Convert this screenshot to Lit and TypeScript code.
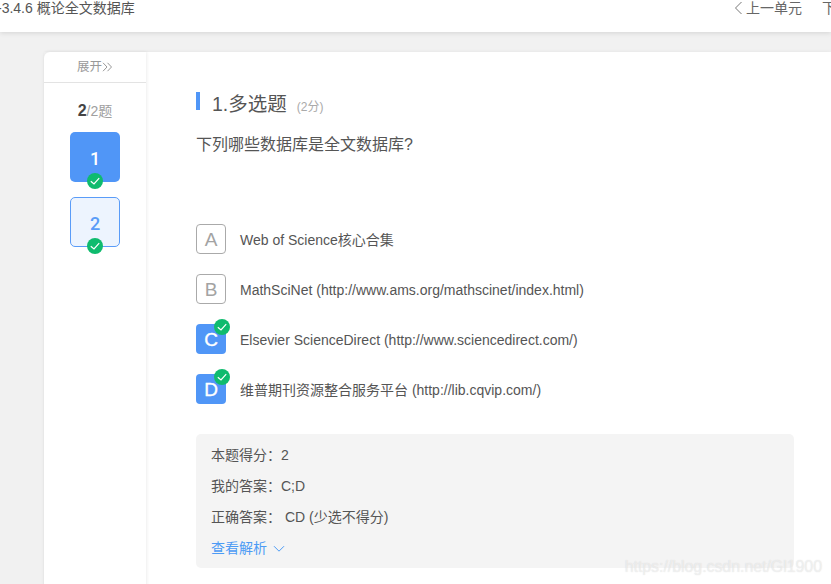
import { LitElement, html, css, svg } from "lit";
import { customElement } from "lit/decorators.js";

const check = svg`<svg class="chk" viewBox="0 0 16 16" width="16" height="16"><circle cx="8" cy="8" r="8" fill="#0fbb6e"/><path d="M3.8 8.2 7 11 12.2 5.2" fill="none" stroke="#fff" stroke-width="1.2"/></svg>`;

@customElement("app-root")
export class AppRoot extends LitElement {
  static styles = css`
    :host {
      display: block;
      width: 831px;
      height: 584px;
      overflow: hidden;
      background: #f1f1f1;
      font-family: "Liberation Sans", "Noto Sans CJK SC", sans-serif;
      color: #555;
    }
    .top {
      height: 32px;
      background: #fff;
      box-shadow: 0 1px 5px rgba(0, 0, 0, 0.12);
      display: flex;
      justify-content: space-between;
      font-size: 14px;
      line-height: 16px;
      color: #555;
      overflow: hidden;
      white-space: nowrap;
      position: relative;
    }
    .crumb { margin-left: -3px; }
    .nav { display: flex; gap: 20px; width: 97px; flex: none; align-items: flex-start; }
    .nav span { display: flex; align-items: center; gap: 3px; color: #666; }
    .nav svg { display: block; }
    .wrap { padding: 20px 0 0 44px; }
    .card {
      display: flex;
      height: 540px;
      background: #fff;
      border-radius: 6px 0 0 0;
      box-shadow: 0 0 4px rgba(0, 0, 0, 0.06);
    }
    .side {
      width: 102px;
      flex: none;
      box-shadow: 1px 0 3px rgba(0, 0, 0, 0.07);
      display: flex;
      flex-direction: column;
      align-items: center;
    }
    .expand {
      align-self: stretch;
      height: 30px;
      border-bottom: 1px solid #e3e3e3;
      display: flex;
      justify-content: center;
      align-items: flex-start;
      font-size: 12.5px;
      line-height: 30px;
      color: #999;
    }
    .expand svg { margin-top: 10px; }
    .count { margin-top: 19px; font-size: 14px; line-height: 18px; color: #a0a0a0; }
    .count b { font-size: 16px; color: #444; }
    .tile {
      position: relative;
      width: 50px;
      height: 50px;
      box-sizing: border-box;
      border-radius: 5px;
      margin-bottom: 15px;
      display: flex;
      align-items: center;
      justify-content: center;
      padding-top: 2px;
      font-family: Roboto, "Liberation Sans", sans-serif;
      font-size: 18px;
      font-weight: 500;
    }
    .tile.first { margin-top: 12px; background: #5096f7; color: #fff; }
    .tile.second { background: #edf4fe; border: 1px solid #5a9cf8; color: #5a9cf8; }
    .tile .chk { position: absolute; left: 17px; bottom: -7px; }
    .tile.second .chk { left: 16px; bottom: -8px; }
    .main { flex: 1; padding: 40px 37px 0 50px; min-width: 0; }
    .title { display: flex; align-items: center; height: 22px; color: #555; }
    .bar { width: 4px; height: 18px; background: #5096f7; margin-right: 12px; margin-top: -4px; }
    .name { font-size: 19.5px; line-height: 22px; color: #555; margin-top: 1px; }
    .pts { font-size: 12px; color: #aaa; margin-left: 10px; margin-top: 4px; }
    .q { font-size: 16px; line-height: 22px; margin-top: 20px; color: #555; }
    .opts { margin-top: 68px; display: flex; flex-direction: column; gap: 20px; }
    .opt { display: flex; align-items: center; gap: 14px; height: 30px; line-height: 30px; font-size: 14px; color: #555; white-space: nowrap; }
    .txt { padding-top: 1px; }
    .let {
      position: relative;
      width: 30px;
      height: 30px;
      box-sizing: border-box;
      border-radius: 4px;
      border: 1px solid #aaa;
      color: #a3a3a3;
      display: flex;
      align-items: center;
      justify-content: center;
      font-size: 19px;
      padding-top: 2px;
    }
    .let.on { background: #5096f7; border: none; color: #fff; -webkit-text-stroke: 0.35px #fff; }
    .let .chk { position: absolute; right: -4px; top: -5px; -webkit-text-stroke: 0; }
    .info {
      margin-top: 30px;
      height: 134px;
      box-sizing: border-box;
      background: #f4f4f4;
      border-radius: 5px;
      padding: 6px 15px;
      font-size: 14px;
      color: #555;
    }
    .info div { height: 31px; line-height: 31px; white-space: nowrap; }
    .more { color: #4c9bf5; display: flex; align-items: center; gap: 6px; }
    .mark {
      position: absolute;
      right: 9px;
      bottom: 8px;
      font-size: 16px;
      letter-spacing: -0.07px;
      color: rgba(255, 255, 255, 0.5);
      text-shadow: 0 0 1px rgba(170, 170, 170, 0.45);
      white-space: nowrap;
    }
    .page { position: relative; height: 584px; }
  `;

  render() {
    const opts = [
      ["A", "Web of Science核心合集", false],
      ["B", "MathSciNet (http://www.ams.org/mathscinet/index.html)", false],
      ["C", "Elsevier ScienceDirect (http://www.sciencedirect.com/)", true],
      ["D", "维普期刊资源整合服务平台 (http://lib.cqvip.com/)", true],
    ] as const;
    return html`
      <div class="page">
        <div class="top">
          <span class="crumb">-3.4.6 概论全文数据库</span>
          <div class="nav">
            <span>
              <svg width="9" height="14" viewBox="0 0 9 14"><path d="M7.5 1 1.5 7l6 6" fill="none" stroke="#777" stroke-width="1"/></svg>
              上一单元
            </span>
            <span>下一单元</span>
          </div>
        </div>
        <div class="wrap">
          <div class="card">
            <aside class="side">
              <div class="expand">
                展开
                <svg width="11" height="10" viewBox="0 0 11 10"><path d="M1 .8 5 5 1 9.2M5.5 .8 9.5 5l-4 4.2" fill="none" stroke="#999" stroke-width="1"/></svg>
              </div>
              <div class="count"><b>2</b>/2题</div>
              <div class="tile first">1${check}</div>
              <div class="tile second">2${check}</div>
            </aside>
            <main class="main">
              <div class="title">
                <span class="bar"></span>
                <span class="name">1.多选题</span>
                <span class="pts">(2分)</span>
              </div>
              <div class="q">下列哪些数据库是全文数据库?</div>
              <div class="opts">
                ${opts.map(
                  ([l, t, on]) => html`<div class="opt">
                    <span class="let ${on ? "on" : ""}">${l}${on ? check : ""}</span>
                    <span class="txt">${t}</span>
                  </div>`
                )}
              </div>
              <section class="info">
                <div>本题得分：2</div>
                <div>我的答案：C;D</div>
                <div>正确答案： CD (少选不得分)</div>
                <div class="more">
                  查看解析
                  <svg width="12" height="8" viewBox="0 0 12 8"><path d="M1 1.2 6 6.2l5-5" fill="none" stroke="#4c9bf5" stroke-width="1"/></svg>
                </div>
              </section>
            </main>
          </div>
        </div>
        <div class="mark">https://blog.csdn.net/Gl1900</div>
      </div>
    `;
  }
}
